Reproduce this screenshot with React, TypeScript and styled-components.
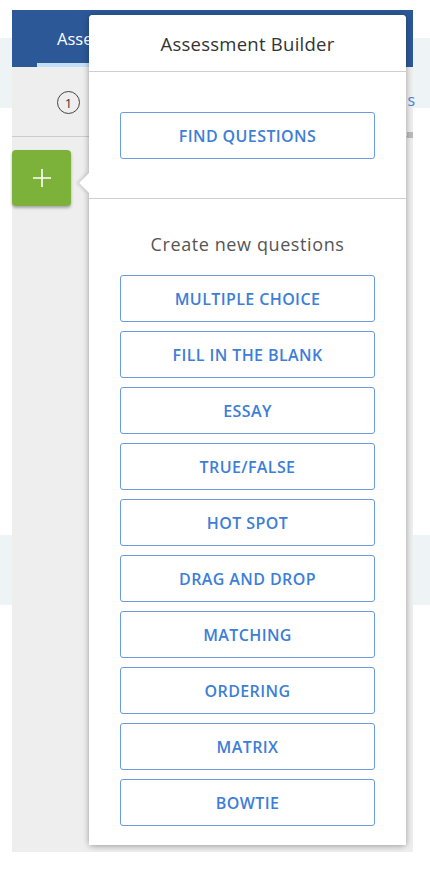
import React from "react";
import styled, { createGlobalStyle } from "styled-components";

const Global = createGlobalStyle`
  html, body { margin: 0; padding: 0; }
  body {
    font-family: "Open Sans", "Noto Sans", "Liberation Sans", sans-serif;
    background: #ffffff;
  }
`;

const Page = styled.div`
  position: relative;
  width: 430px;
  height: 872px;
  overflow: hidden;
  padding-top: 10px;
  box-sizing: border-box;
  background: linear-gradient(
    to bottom,
    #ffffff 0px,
    #ffffff 38px,
    #eef3f6 38px,
    #eef3f6 108px,
    #ffffff 108px,
    #ffffff 535px,
    #eef3f6 535px,
    #eef3f6 605px,
    #ffffff 605px
  );
`;

const Frame = styled.div`
  margin-left: 12px;
  width: 401px;
  height: 842px;
  background: #eeeeee;
  display: flex;
  flex-direction: column;
`;

const TopBar = styled.div`
  height: 57px;
  background: #2c5898;
  display: flex;
  align-items: flex-end;
  padding-left: 25px;
  box-sizing: border-box;
`;

const Tab = styled.div`
  width: 120px;
  height: 57px;
  box-sizing: border-box;
  border-bottom: 4px solid #c3e0f6;
  color: #ffffff;
  font-size: 16.5px;
  padding: 17px 0 0 20px;
`;

const SubRow = styled.div`
  height: 69px;
  border-bottom: 1px solid #cccccc;
  display: flex;
  align-items: center;
  padding-left: 45px;
  position: relative;
`;

const StepNum = styled.span`
  width: 23px;
  height: 23px;
  border-radius: 50%;
  border: 1.3px solid #444;
  color: #333;
  font-size: 13px;
  display: flex;
  align-items: center;
  justify-content: center;
  margin-top: 2px;
  box-sizing: border-box;
`;

const EdgeText = styled.span`
  position: absolute;
  right: -2px;
  top: 22px;
  color: #4a86d4;
  font-size: 16px;
`;

const ScrollThumb = styled.div`
  position: absolute;
  right: 0;
  bottom: -2px;
  width: 6px;
  height: 6px;
  background: #bbbbbb;
`;

const Body = styled.div`
  padding-top: 13px;
`;

const AddButton = styled.div`
  width: 59px;
  height: 56px;
  background: #7db23a;
  border-radius: 4px;
  box-shadow: 0 2px 3px rgba(0, 0, 0, 0.3);
  display: flex;
  align-items: center;
  justify-content: center;
`;

const Popover = styled.div`
  position: absolute;
  left: 89px;
  top: 15px;
  width: 317px;
  height: 830px;
  background: #ffffff;
  border-radius: 4px;
  box-shadow: 0 1px 6px rgba(0, 0, 0, 0.35);
  display: flex;
  flex-direction: column;
`;

const Arrow = styled.div`
  position: absolute;
  left: -7px;
  top: 161px;
  width: 14px;
  height: 14px;
  background: #ffffff;
  transform: rotate(45deg);
  box-shadow: -2px 2px 3px rgba(0, 0, 0, 0.12);
`;

const Title = styled.div`
  height: 57px;
  border-bottom: 1px solid #cfcfcf;
  display: flex;
  align-items: center;
  justify-content: center;
  font-size: 18.5px;
  letter-spacing: 0.25px;
  color: #333333;
  position: relative;
  z-index: 1;
  background: #fff;
  border-radius: 4px 4px 0 0;
`;

const Section = styled.div<{ $pt: number; $pb: number }>`
  padding: ${(p) => p.$pt}px 31px ${(p) => p.$pb}px;
  display: flex;
  flex-direction: column;
  gap: 9px;
  position: relative;
  z-index: 1;
  background: #fff;
`;

const FindSection = styled(Section)`
  border-bottom: 1px solid #cfcfcf;
`;

const Subtitle = styled.div`
  text-align: center;
  font-size: 18px;
  letter-spacing: 0.6px;
  color: #555555;
  margin-bottom: 10px;
`;

const OptionButton = styled.button`
  width: 255px;
  height: 47px;
  background: #ffffff;
  border: 1.5px solid #6a9be0;
  border-radius: 3px;
  color: #3d7ed6;
  font-family: "Open Sans", "Noto Sans", "Liberation Sans", sans-serif;
  font-weight: 600;
  font-size: 16px;
  letter-spacing: 0.4px;
  text-transform: uppercase;
  cursor: pointer;
  box-sizing: border-box;
`;

const types = [
  "Multiple Choice",
  "Fill in the Blank",
  "Essay",
  "True/False",
  "Hot Spot",
  "Drag and Drop",
  "Matching",
  "Ordering",
  "Matrix",
  "Bowtie",
];

export default function App() {
  return (
    <>
      <Global />
      <Page>
        <Frame>
          <TopBar>
            <Tab>Assessment</Tab>
          </TopBar>
          <SubRow>
            <StepNum>1</StepNum>
            <EdgeText>s</EdgeText>
            <ScrollThumb />
          </SubRow>
          <Body>
            <AddButton>
              <svg width="20" height="20" viewBox="0 0 20 20">
                <path d="M10 1v18M1 10h18" stroke="#fff" strokeWidth="1.6" />
              </svg>
            </AddButton>
          </Body>
        </Frame>
        <Popover>
          <Arrow />
          <Title>Assessment Builder</Title>
          <FindSection $pt={40} $pb={39}>
            <OptionButton>Find Questions</OptionButton>
          </FindSection>
          <Section $pt={33} $pb={19}>
            <Subtitle>Create new questions</Subtitle>
            {types.map((t) => (
              <OptionButton key={t}>{t}</OptionButton>
            ))}
          </Section>
        </Popover>
      </Page>
    </>
  );
}
